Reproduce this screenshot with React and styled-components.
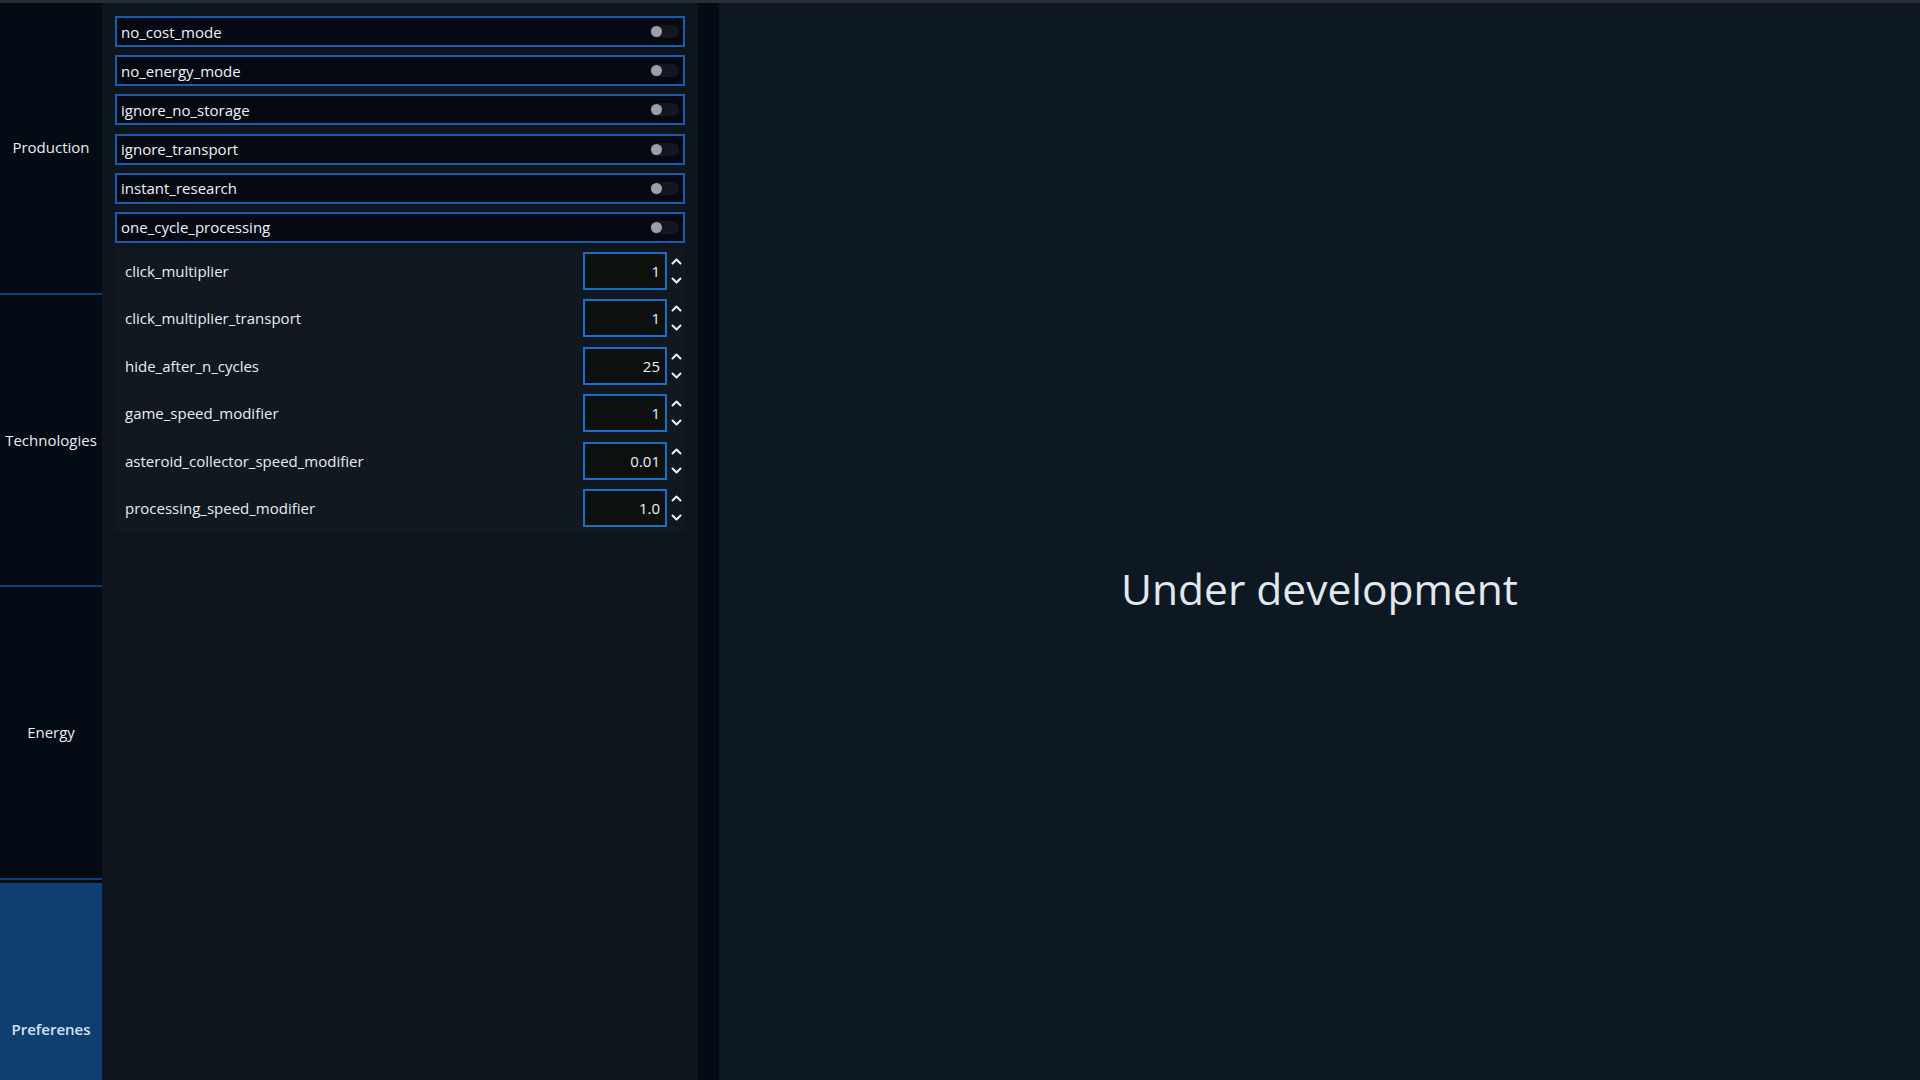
import React from "react";
import styled, { createGlobalStyle } from "styled-components";

const GlobalStyle = createGlobalStyle`
  html, body {
    margin: 0;
    padding: 0;
    overflow: hidden;
    background: #0e1822;
    font-family: "Open Sans", "Noto Sans", sans-serif;
  }
  * {
    box-sizing: border-box;
  }
`;

const toggles = [
  "no_cost_mode",
  "no_energy_mode",
  "ignore_no_storage",
  "ignore_transport",
  "instant_research",
  "one_cycle_processing",
];

const numbers = [
  { name: "click_multiplier", value: "1" },
  { name: "click_multiplier_transport", value: "1" },
  { name: "hide_after_n_cycles", value: "25" },
  { name: "game_speed_modifier", value: "1" },
  { name: "asteroid_collector_speed_modifier", value: "0.01" },
  { name: "processing_speed_modifier", value: "1.0" },
];

const tabs = ["Production", "Technologies", "Energy", "Preferenes"];

const Chevron = ({ up }) => (
  <svg width="11" height="7" viewBox="0 0 11 7">
    <path
      d={up ? "M1.5 5.5 L5.5 1.5 L9.5 5.5" : "M1.5 1.5 L5.5 5.5 L9.5 1.5"}
      fill="none"
      stroke="#eef1f4"
      strokeWidth="2"
      strokeLinecap="round"
      strokeLinejoin="round"
    />
  </svg>
);

const App = () => {
  return (
    <>
      <GlobalStyle />
      <TopLine />
      <Layout>
        <Sidebar>
          {tabs.map((tab) => (
            <NavItem key={tab} $active={tab === "Preferenes"}>
              {tab}
            </NavItem>
          ))}
        </Sidebar>
        <Panel>
          <ToggleList>
            {toggles.map((name) => (
              <ToggleRow key={name}>
                <Label>{name}</Label>
                <Track>
                  <Knob />
                </Track>
              </ToggleRow>
            ))}
          </ToggleList>
          <NumberList>
            {numbers.map((n) => (
              <NumberRow key={n.name}>
                <NumberLabel>{n.name}</NumberLabel>
                <InputWrap>
                  <NumberBox>{n.value}</NumberBox>
                  <Spinner>
                    <Chevron up />
                    <Chevron />
                  </Spinner>
                </InputWrap>
              </NumberRow>
            ))}
          </NumberList>
        </Panel>
        <Divider />
        <Main>
          <Title>Under development</Title>
        </Main>
      </Layout>
    </>
  );
};

export default App;

const TopLine = styled.div`
  position: fixed;
  top: 0;
  left: 0;
  right: 0;
  height: 3px;
  background: #2a2d32;
  z-index: 10;
`;

const Layout = styled.div`
  display: flex;
  height: 1176px;
  width: 100%;
`;

const Sidebar = styled.nav`
  width: 102px;
  flex-shrink: 0;
  display: flex;
  flex-direction: column;
  padding-top: 2px;
  background: #050b14;
`;

const NavItem = styled.div`
  height: ${(p) => (p.$active ? "297px" : "293px")};
  display: flex;
  align-items: center;
  justify-content: center;
  font-size: 15px;
  font-weight: ${(p) => (p.$active ? 600 : 400)};
  color: ${(p) => (p.$active ? "#d4e2f0" : "#e8edf3")};
  background: ${(p) => (p.$active ? "#0e3f70" : "#050b14")};
  border-bottom: ${(p) => (p.$active ? "none" : "2px solid #0d3f7a")};
  border-top: ${(p) => (p.$active ? "3px solid #050b14" : "none")};
`;

const Panel = styled.section`
  width: 596px;
  flex-shrink: 0;
  background: #0e151d;
  padding: 16px 13px;
`;

const ToggleList = styled.div`
  display: flex;
  flex-direction: column;
  gap: 8.2px;
`;

const ToggleRow = styled.div`
  height: 31px;
  display: flex;
  align-items: center;
  justify-content: space-between;
  padding: 0 4px 0 4px;
  background: #050a12;
  border: 2px solid #1a5cb0;
`;

const Label = styled.span`
  font-size: 15px;
  color: #eef2f6;
`;

const Track = styled.div`
  position: relative;
  width: 29px;
  height: 13px;
  border-radius: 7px;
  background: #14181e;
`;

const Knob = styled.div`
  position: absolute;
  left: 1px;
  top: 1px;
  width: 11px;
  height: 11px;
  border-radius: 50%;
  background: #9d9fa2;
`;

const NumberList = styled.div`
  margin-top: 4px;
  display: flex;
  flex-direction: column;
`;

const NumberRow = styled.div`
  height: 47.5px;
  display: flex;
  align-items: center;
  justify-content: space-between;
  padding: 0 3px 0 10px;
  background: #111820;
`;

const NumberLabel = styled.span`
  font-size: 15px;
  color: #e8edf2;
`;

const InputWrap = styled.div`
  display: flex;
  align-items: center;
  gap: 4px;
`;

const NumberBox = styled.div`
  width: 84px;
  height: 38px;
  display: flex;
  align-items: center;
  justify-content: flex-end;
  padding-right: 5px;
  font-size: 15px;
  color: #eef1f4;
  background: #0c100f;
  border: 2px solid #1e6cc6;
`;

const Spinner = styled.div`
  display: flex;
  flex-direction: column;
  align-items: center;
  gap: 12px;
  width: 11px;
`;

const Divider = styled.div`
  width: 21px;
  flex-shrink: 0;
  background: #050b14;
`;

const Main = styled.main`
  flex: 1;
  display: flex;
  align-items: center;
  justify-content: center;
  background: #0e1822;
`;

const Title = styled.h1`
  margin: 0;
  font-size: 42.5px;
  font-weight: 500;
  color: #e1e8f0;
`;
